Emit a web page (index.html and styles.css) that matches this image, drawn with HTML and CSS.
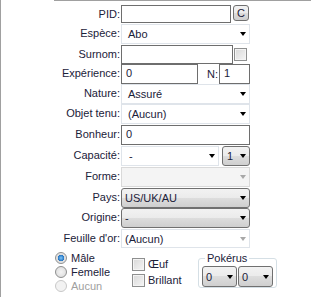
FILE: index.html
```html
<!DOCTYPE html>
<html lang="fr">
<head>
    <meta charset="UTF-8">
    <title>Pokémon</title>
    <link rel="stylesheet" href="styles.css">
</head>
<body>
    <div class="panel">
        <div class="topline"></div>

        <div class="form">
            <div class="lbl">PID:</div>
            <div class="field">
                <div class="text pid"></div>
                <div class="btn">C</div>
            </div>

            <div class="lbl">Espèce:</div>
            <div class="combo light">Abo<span class="arr"></span></div>

            <div class="lbl">Surnom:</div>
            <div class="field">
                <div class="text surnom"></div>
                <div class="check surnom-check"></div>
            </div>

            <div class="lbl">Expérience:</div>
            <div class="field">
                <div class="text exp">0</div>
                <div class="lbl n">N:</div>
                <div class="text niveau">1</div>
            </div>

            <div class="lbl">Nature:</div>
            <div class="combo light">Assuré<span class="arr"></span></div>

            <div class="lbl">Objet tenu:</div>
            <div class="combo light">(Aucun)<span class="arr"></span></div>

            <div class="lbl">Bonheur:</div>
            <div class="text full">0</div>

            <div class="lbl">Capacité:</div>
            <div class="field">
                <div class="combo light capa">-<span class="arr"></span></div>
                <div class="combo drop num">1<span class="arr"></span></div>
            </div>

            <div class="lbl">Forme:</div>
            <div class="combo off"><span class="arr grey"></span></div>

            <div class="lbl">Pays:</div>
            <div class="combo drop">US/UK/AU<span class="arr"></span></div>

            <div class="lbl">Origine:</div>
            <div class="combo drop">-<span class="arr"></span></div>

            <div class="lbl">Feuille d'or:</div>
            <div class="combo light feuille">(Aucun)<span class="arr grey"></span></div>
        </div>

        <div class="bottom">
            <div class="radios">
                <div class="opt"><span class="radio on"></span>Mâle</div>
                <div class="opt"><span class="radio"></span>Femelle</div>
                <div class="opt dis"><span class="radio"></span>Aucun</div>
            </div>

            <div class="checks">
                <div class="opt"><span class="check"></span>Œuf</div>
                <div class="opt"><span class="check"></span>Brillant</div>
            </div>

            <fieldset class="pokerus">
                <legend>Pokérus</legend>
                <div class="combo drop small">0<span class="arr"></span></div>
                <div class="combo drop small">0<span class="arr"></span></div>
            </fieldset>
        </div>
    </div>
</body>
</html>
```

FILE: styles.css
```css
* {
    margin: 0;
    box-sizing: border-box;
}

body {
    font-family: "Liberation Sans", Arial, sans-serif;
    font-size: 11px;
    color: #1b2139;
    background: #fff;
    overflow: hidden;
}

.panel {
    height: 297px;
    border-left: 1px solid #a0a0a0;
}

.topline {
    margin-left: 53px;
    border-top: 1px solid #a0a0a0;
}

.form {
    display: grid;
    grid-template-columns: 120px 129px;
    grid-template-rows: 19px 21px 19px 20px 20px 21px 21px 21px 21px 20px 21px 20px;
    margin-top: 4px;
}

.lbl {
    text-align: right;
    padding-right: 1px;
    line-height: 19px;
    white-space: nowrap;
}

.field {
    display: flex;
    align-items: flex-start;
}

.text {
    height: 19px;
    border: 1px solid #6e6e6e;
    background: #fff;
    padding-left: 4px;
    line-height: 17px;
}

.pid {
    width: 110px;
    height: 18px;
}

.btn {
    width: 16px;
    height: 16px;
    margin-left: 2px;
    border: 1px solid #707070;
    border-radius: 3px;
    background: linear-gradient(#f2f2f2 0%, #ebebeb 50%, #dddddd 50%, #cfcfcf 100%);
    text-align: center;
    line-height: 14px;
    font-size: 11px;
}

.surnom {
    width: 114px;
}

.surnom-check {
    margin: 3px 0 0 1px;
}

.exp {
    width: 77px;
    height: 20px;
}

.n {
    width: 21px;
    line-height: 20px;
}

.niveau {
    width: 31px;
    height: 20px;
}

.full {
    height: 20px;
}

.combo {
    display: flex;
    align-items: center;
    height: 20px;
    padding: 0 3px 0 6px;
    white-space: nowrap;
}

.light {
    border: 1px solid #dfe4ea;
    background: #fff;
}

.drop {
    border: 1px solid #707070;
    border-radius: 3px;
    padding-left: 3px;
    background: linear-gradient(#f2f2f2 0%, #ebebeb 50%, #dddddd 50%, #cfcfcf 100%);
}

.off {
    border: 1px solid #d9d9d9;
    background: #f4f4f4;
}

.feuille {
    height: 19px;
    padding-left: 3px;
}

.capa {
    width: 98px;
    padding-left: 7px;
}

.num {
    width: 28px;
    margin-left: 3px;
    padding-left: 4px;
}

.arr {
    margin-left: auto;
    width: 0;
    height: 0;
    border-top: 4px solid #000;
    border-left: 3.5px solid transparent;
    border-right: 3.5px solid transparent;
}

.arr.grey {
    border-top-color: #a8a8a8;
}

.bottom {
    display: flex;
    align-items: flex-start;
    padding-left: 54px;
    margin-top: 2px;
}

.radios {
    width: 77px;
}

.opt {
    display: flex;
    align-items: center;
    line-height: 14px;
    height: 14px;
}

.dis {
    color: #a0a0a0;
}

.radio {
    width: 12px;
    height: 12px;
    margin-right: 4px;
    border: 1px solid #8e8f8f;
    border-radius: 50%;
    background: radial-gradient(circle, #f4f4f4 0%, #d8d8d8 100%);
}

.radio.on {
    background: radial-gradient(circle, #7fc6f8 0%, #1e6fbf 45%, #dcdcdc 50%, #f2f2f2 100%);
}

.dis .radio {
    border-color: #c8c8c8;
    background: #f2f2f2;
}

.checks {
    width: 66px;
    margin-top: 5px;
}

.checks .opt {
    height: 16px;
}

.check {
    width: 13px;
    height: 13px;
    margin-right: 3px;
    border: 1px solid #8e8f8f;
    background: linear-gradient(135deg, #d8d8d8 0%, #f6f6f6 100%);
    box-shadow: inset 0 0 0 1px #f4f4f4;
}

.pokerus {
    display: flex;
    gap: 1px;
    width: 79px;
    padding: 0 3px 0 3px;
    border: 1px solid #d5dfe5;
    border-radius: 3px;
    margin-top: 1px;
}

.pokerus legend {
    padding: 0 2px;
    margin-left: 3px;
    line-height: 12px;
}

.small {
    width: 35px;
    height: 21px;
    margin-top: 2px;
}
```
